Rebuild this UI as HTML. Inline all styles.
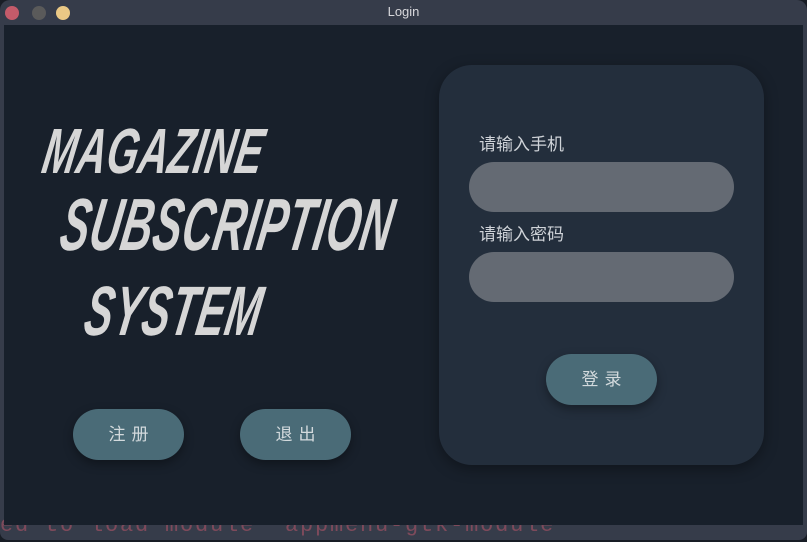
<!DOCTYPE html>
<html><head><meta charset="utf-8"><style>
*{margin:0;padding:0;box-sizing:border-box}
body{width:807px;height:542px;background:#181d25;overflow:hidden;position:relative;font-family:"Liberation Sans","Noto Sans CJK SC",sans-serif}
.win{position:absolute;left:0;top:0;width:807px;height:540px;background:#363c4a;border-radius:10px 10px 8px 8px;overflow:hidden}
.title{position:absolute;left:0;top:0;width:807px;height:25px;text-align:center;color:#d8d8dc;font-size:13px;line-height:24px}
.dot{position:absolute;top:6px;width:14px;height:14px;border-radius:50%}
.content{position:absolute;left:4px;top:25px;width:799px;height:500px;background:#18202b}
.bottom{position:absolute;left:0;top:513px;font-family:"Liberation Mono",monospace;font-size:22px;color:#7e4a5b;letter-spacing:1.8px;white-space:pre}
.logo{position:absolute;color:#d6d6d6;font-family:"Liberation Sans Narrow","Liberation Sans",sans-serif;font-weight:bold;font-style:italic;letter-spacing:1px;transform-origin:left;white-space:nowrap}
.panel{position:absolute;left:439px;top:65px;width:325px;height:400px;background:#232e3c;border-radius:33px;box-shadow:0 4px 14px rgba(0,0,0,.35)}
.lbl{position:absolute;color:#cfd3d8;font-size:17px}
.inp{position:absolute;left:469px;width:265px;height:50px;border-radius:25px;background:#646a73}
.btn{position:absolute;width:111px;height:51px;border-radius:26px;background:#4a6b77;color:#d3dadd;font-size:17px;text-align:center;line-height:51px;letter-spacing:6px;text-indent:6px;box-shadow:0 4px 10px rgba(0,0,0,.35)}
</style></head><body>
<div class="win">
<div class="title">Login</div>
<div class="dot" style="left:5px;background:#c45b6a"></div>
<div class="dot" style="left:32px;background:#5a5a5a"></div>
<div class="dot" style="left:56px;background:#eac885"></div>
<div class="bottom">ed to load module  appmenu-gtk-module</div>
<div class="content"></div>
</div>
<div class="logo" style="left:44px;top:114px;font-size:64px;transform:skewX(-10deg) scaleX(0.63)">MAGAZINE</div>
<div class="logo" style="left:62px;top:182px;font-size:74px;transform:skewX(-10deg) scaleX(0.58)">SUBSCRIPTION</div>
<div class="logo" style="left:86px;top:271px;font-size:70px;transform:skewX(-10deg) scaleX(0.6)">SYSTEM</div>
<div class="btn" style="left:73px;top:409px">注册</div>
<div class="btn" style="left:240px;top:409px">退出</div>
<div class="panel"></div>
<div class="lbl" style="left:479px;top:130px">请输入手机</div>
<div class="inp" style="top:162px"></div>
<div class="lbl" style="left:479px;top:220px">请输入密码</div>
<div class="inp" style="top:252px"></div>
<div class="btn" style="left:546px;top:354px">登录</div>
</body></html>
